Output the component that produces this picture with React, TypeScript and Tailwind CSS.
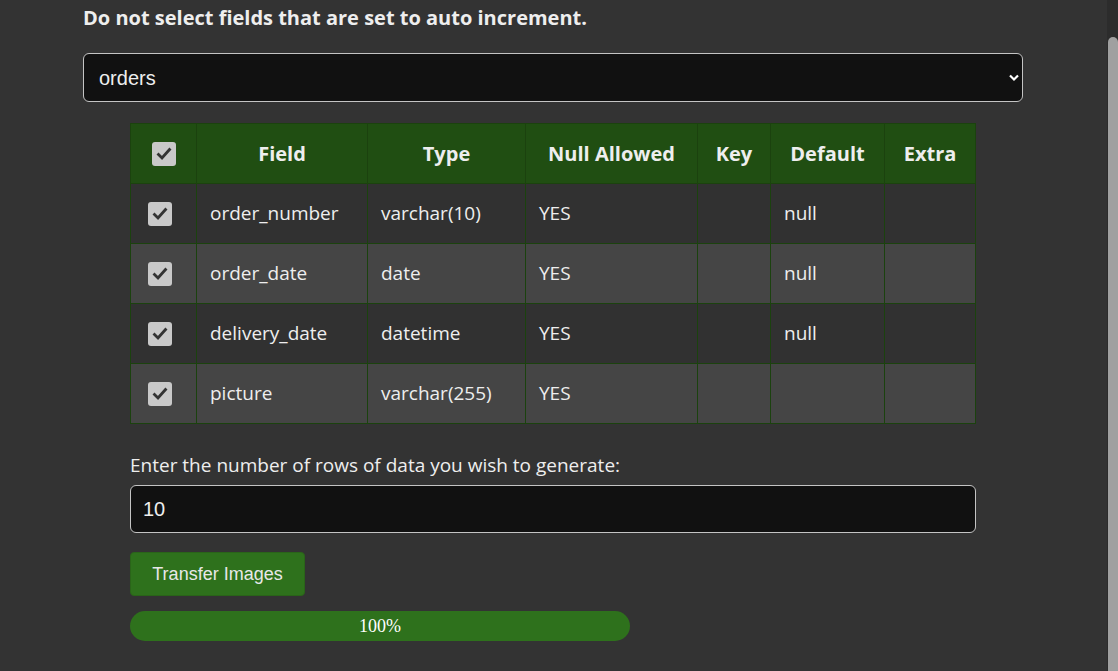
import React from "react";

const rows = [
  { field: "order_number", type: "varchar(10)", nul: "YES", key: "", def: "null", extra: "" },
  { field: "order_date", type: "date", nul: "YES", key: "", def: "null", extra: "" },
  { field: "delivery_date", type: "datetime", nul: "YES", key: "", def: "null", extra: "" },
  { field: "picture", type: "varchar(255)", nul: "YES", key: "", def: "", extra: "" },
];

function Check() {
  return (
    <div className="w-[24px] h-[24px] rounded-[3px] bg-[#c9c9c9] flex items-center justify-center">
      <svg width="16" height="16" viewBox="0 0 16 16">
        <path d="M2.5 8.5 L6 12 L13.5 3.5" fill="none" stroke="#333" strokeWidth="2.8" strokeLinecap="square" />
      </svg>
    </div>
  );
}

export default function App() {
  const cell = "border border-[#1b420e] px-[13px] text-left font-normal";
  const head = "border border-[#1b420e] px-[10px] text-center font-bold text-[20px]";
  return (
    <div className="w-[1118px] h-[671px] overflow-hidden bg-[#333333] flex text-[#eeeeee]">
      <div className="flex-1 pl-[83px] pt-[4px]">
        <div className="font-['Open_Sans',sans-serif] font-bold text-[20px] leading-[28px]">
          Do not select fields that are set to auto increment.
        </div>
        <div className="mt-[21px] w-[940px] h-[49px] rounded-[6px] border border-[#c4c4c4] bg-[#111111] flex items-center justify-between pl-[15px] pr-[2px]">
          <span className="font-['Liberation_Sans',Arial,sans-serif] text-[20px]">orders</span>
          <svg width="12" height="9" viewBox="0 0 12 9">
            <path d="M2 2.5 L6 6.5 L10 2.5" fill="none" stroke="#fff" strokeWidth="2.2" />
          </svg>
        </div>
        <div className="pl-[47px] pt-[21px] font-['Open_Sans',sans-serif]">
          <table className="border-collapse w-[846px] text-[19px]">
            <thead>
              <tr className="bg-[#204e12] h-[60px]">
                <th className={head + " w-[66px]"}>
                  <div className="flex justify-center"><Check /></div>
                </th>
                <th className={head + " w-[171px]"}>Field</th>
                <th className={head + " w-[158px]"}>Type</th>
                <th className={head + " w-[172px]"}>Null Allowed</th>
                <th className={head + " w-[73px]"}>Key</th>
                <th className={head + " w-[114px]"}>Default</th>
                <th className={head}>Extra</th>
              </tr>
            </thead>
            <tbody>
              {rows.map((r, i) => (
                <tr key={r.field} className={(i % 2 === 0 ? "bg-[#313131]" : "bg-[#454545]") + " h-[60px]"}>
                  <td className={cell + " pl-[17px]"}>
                    <Check />
                  </td>
                  <td className={cell}>{r.field}</td>
                  <td className={cell}>{r.type}</td>
                  <td className={cell}>{r.nul}</td>
                  <td className={cell}>{r.key}</td>
                  <td className={cell}>{r.def}</td>
                  <td className={cell}>{r.extra}</td>
                </tr>
              ))}
            </tbody>
          </table>
          <div className="mt-[28px] text-[19px] leading-[27px]">
            Enter the number of rows of data you wish to generate:
          </div>
          <div className="mt-[6px] w-[846px] h-[48px] rounded-[6px] border border-[#c4c4c4] bg-[#111111] flex items-center pl-[12px]">
            <span className="font-['Liberation_Sans',Arial,sans-serif] text-[20px]">10</span>
          </div>
          <div className="mt-[19px] w-[175px] h-[44px] rounded-[4px] bg-[#2e711c] border border-[#2a6419] flex items-center justify-center font-['Liberation_Sans',Arial,sans-serif] text-[18px] text-[#e8e8e8]">
            Transfer Images
          </div>
          <div className="mt-[15px] w-[500px] h-[30px] rounded-full bg-[#2e711c] flex items-center justify-center font-['Liberation_Serif',serif] text-[18px] text-white">
            100%
          </div>
        </div>
      </div>
      <div className="w-[11px] bg-[#2c2c2c] pt-[37px] pl-[1px]">
        <div className="w-[10px] h-full bg-[#a0a0a0] rounded-t-[5px]" />
      </div>
    </div>
  );
}
